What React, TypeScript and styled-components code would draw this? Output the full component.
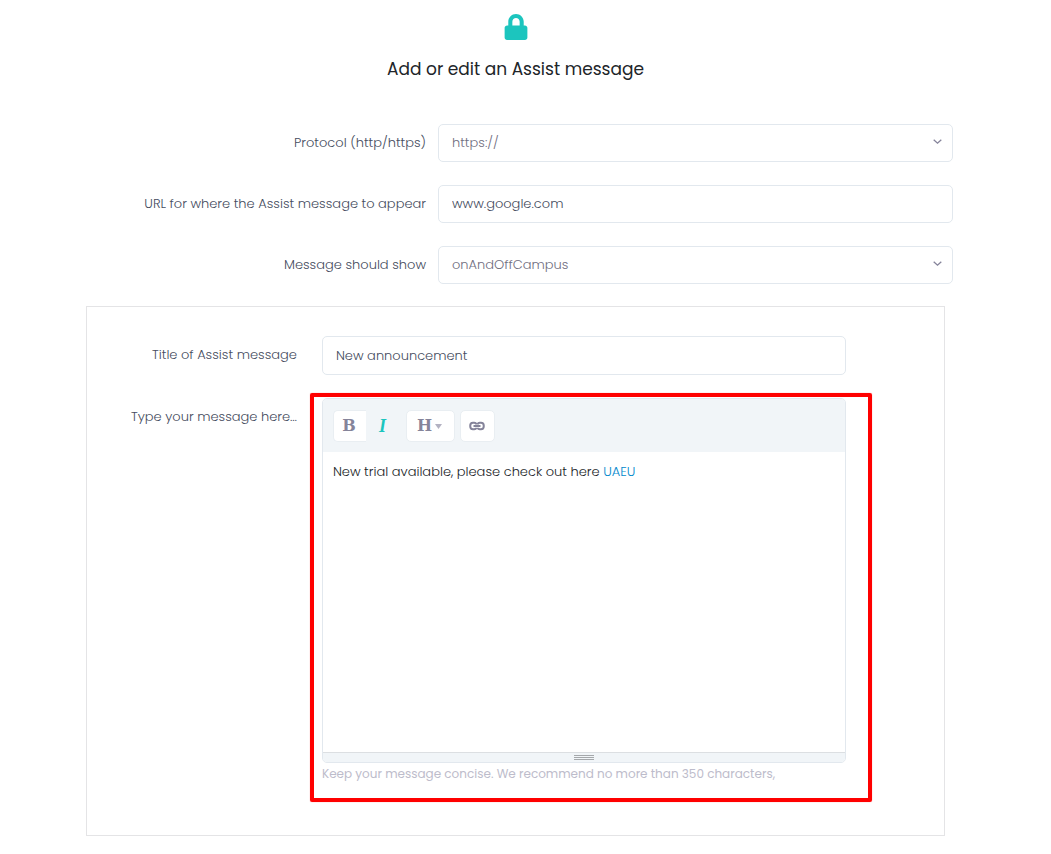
import React from "react";
import styled, { createGlobalStyle } from "styled-components";
import { FaLock } from "react-icons/fa";

const GlobalStyle = createGlobalStyle`
  *, *::before, *::after { box-sizing: border-box; }
  body {
    margin: 0;
    background: #fff;
    color: #575962;
    font: 300 13px/20px Poppins, Inter, "Open Sans", sans-serif;
  }
  input, select, button { font: inherit; }
`;

const Page = styled.main`
  padding: 14px 20px 18px 0;
`;

const Header = styled.header`
  display: flex;
  flex-direction: column;
  align-items: center;
  gap: 16px;
  margin-bottom: 42px;
  color: #1cc5be;
`;

const Title = styled.h1`
  margin: 0;
  color: #212529;
  font-size: 17px;
  font-weight: 400;
  line-height: 26px;
`;

const Fields = styled.div`
  display: flex;
  flex-direction: column;
  gap: 23px;
  margin-bottom: 22px;
`;

const Row = styled.div`
  display: grid;
  grid-template-columns: 438fr 515fr 78fr;
`;

const PanelRow = styled(Row)`
  grid-template-columns: 235fr 524fr 98fr;
`;

const Label = styled.label`
  padding: 9px 12px 0 0;
  color: #464d60;
  text-align: right;
`;

const PanelLabel = styled(Label)`
  padding-right: 25px;
`;

const TextInput = styled.input`
  width: 100%;
  height: 38px;
  padding: 0 13px;
  border: 1px solid #e2e8ee;
  border-radius: 5px;
  background: #fff;
  color: #464d60;
  outline: none;
`;

const TitleInput = styled(TextInput)`
  height: 39px;
`;

const SelectWrap = styled.div`
  position: relative;

  svg {
    position: absolute;
    top: 14px;
    right: 11px;
    pointer-events: none;
  }
`;

const Select = styled.select`
  appearance: none;
  display: block;
  width: 100%;
  height: 38px;
  padding: 0 32px 0 13px;
  border: 1px solid #e2e8ee;
  border-radius: 5px;
  background: #fff;
  color: #706e80;
  outline: none;
`;

const Panel = styled.section`
  display: flex;
  flex-direction: column;
  gap: 23px;
  width: calc(100% * 10 / 12);
  margin: 0 auto;
  padding: 29px 0 51px;
  border: 1px solid #e4e4e6;
`;

const Highlighted = styled.div`
  position: relative;
`;

const HighlightFrame = styled.div`
  position: absolute;
  inset: -5px -26px -18px -12px;
  border: 4px solid #f00;
  border-radius: 2px;
  box-shadow: 0 0 1px #f66;
  pointer-events: none;
`;

const Editor = styled.div`
  overflow: hidden;
  border: 1px solid #e2e8ee;
  border-radius: 5px;
`;

const Toolbar = styled.div`
  display: flex;
  align-items: flex-start;
  height: 53px;
  padding: 11px 10px 0;
  background: #f1f5f8;
`;

const ButtonGroup = styled.div`
  display: flex;
  margin-right: 5px;
`;

const ToolButton = styled.button<{ $width: number; $active?: boolean }>`
  display: flex;
  align-items: center;
  justify-content: center;
  gap: 3px;
  width: ${(p) => p.$width}px;
  height: 32px;
  padding: 0 2px 0 0;
  border: 1px solid ${(p) => (p.$active ? "transparent" : "#e9eef2")};
  border-radius: 5px;
  background: ${(p) => (p.$active ? "transparent" : "#fff")};
  color: ${(p) => (p.$active ? "#1cc5be" : "#85849a")};
  font-family: "DejaVu Serif", serif;
  font-size: 16px;
  font-weight: 700;

  ${ButtonGroup} &:first-child:not(:last-child) {
    border-right: 0;
    border-radius: 5px 0 0 5px;
  }
`;

const IconButton = styled(ToolButton)`
  padding: 0;
`;

const Italic = styled.em`
  font-family: "Liberation Serif", serif;
  font-size: 18px;
`;

const Content = styled.div`
  height: 300px;
  padding: 10px;
  color: #212529;
  outline: none;

  p { margin: 0; }
  a { color: #0088cc; text-decoration: none; }
`;

const ResizeBar = styled.div`
  display: flex;
  justify-content: center;
  height: 10px;
  padding-top: 2px;
  border-top: 1px solid #dcdfe2;
  background: #f1f5f8;
`;

const Grip = styled.div`
  width: 20px;
  height: 5px;
  border: solid #a5a8ab;
  border-width: 1px 0;
  background: linear-gradient(#a5a8ab, #a5a8ab) center / 100% 1px no-repeat;
`;

const Hint = styled.p`
  margin: 1px 0 0;
  color: #bdbccb;
  font-size: 12px;
  font-weight: 400;
`;

const Chevron = () => (
  <svg width="9" height="8" viewBox="0 0 9 8" fill="none" stroke="#85839a" strokeWidth="1.3" aria-hidden>
    <path d="M.7 1.8 4.5 5.2 8.3 1.8" />
  </svg>
);

const Caret = () => (
  <svg width="7" height="5" viewBox="0 0 7 5" fill="#b3b2c2" aria-hidden>
    <path d="M0 0h7L3.5 5z" />
  </svg>
);

const LinkIcon = () => (
  <svg width="16" height="10" viewBox="0 0 16 10" fill="none" stroke="currentColor" strokeWidth="2" aria-hidden>
    <path d="M7.2 3.6C7.2 2.4 6.4 1.8 5.2 1.8H4C2.200 1.8 1.200 3.100 1.200 5S2.200 8.200 4 8.200H5.200C6.400 8.200 7.200 7.600 7.200 6.800M8.800 3.600C8.800 2.400 9.600 1.800 10.800 1.800H12C13.800 1.800 14.800 3.100 14.800 5S13.800 8.200 12 8.200H10.800C9.600 8.200 8.800 7.600 8.800 6.800M4.500 5H11.500" />
  </svg>
);

export default function App() {
  return (
    <>
      <GlobalStyle />
      <Page>
        <Header>
          <FaLock size={26} aria-hidden />
          <Title>Add or edit an Assist message</Title>
        </Header>
        <form>
          <Fields>
            <Row>
              <Label htmlFor="protocol">Protocol (http/https)</Label>
              <SelectWrap>
                <Select id="protocol" defaultValue="https://">
                  <option>https://</option>
                  <option>http://</option>
                </Select>
                <Chevron />
              </SelectWrap>
            </Row>
            <Row>
              <Label htmlFor="url">URL for where the Assist message to appear</Label>
              <TextInput id="url" type="text" defaultValue="www.google.com" />
            </Row>
            <Row>
              <Label htmlFor="show">Message should show</Label>
              <SelectWrap>
                <Select id="show" defaultValue="onAndOffCampus">
                  <option>onAndOffCampus</option>
                </Select>
                <Chevron />
              </SelectWrap>
            </Row>
          </Fields>
          <Panel>
            <PanelRow>
              <PanelLabel htmlFor="title">Title of Assist message</PanelLabel>
              <TitleInput id="title" type="text" defaultValue="New announcement" />
            </PanelRow>
            <PanelRow>
              <PanelLabel as="span" id="message-label">Type your message here…</PanelLabel>
              <Highlighted>
                <Editor>
                  <Toolbar role="toolbar" aria-label="Formatting">
                    <ButtonGroup>
                      <ToolButton type="button" $width={33} aria-label="Bold">B</ToolButton>
                      <ToolButton type="button" $width={35} $active aria-label="Italic" aria-pressed>
                        <Italic>I</Italic>
                      </ToolButton>
                    </ButtonGroup>
                    <ButtonGroup>
                      <ToolButton type="button" $width={49} aria-label="Heading">
                        H<Caret />
                      </ToolButton>
                    </ButtonGroup>
                    <ButtonGroup>
                      <IconButton type="button" $width={35} aria-label="Link">
                        <LinkIcon />
                      </IconButton>
                    </ButtonGroup>
                  </Toolbar>
                  <Content
                    contentEditable
                    suppressContentEditableWarning
                    role="textbox"
                    aria-multiline
                    aria-labelledby="message-label"
                  >
                    <p>
                      New trial available, please check out here <a href="#uaeu">UAEU</a>
                    </p>
                  </Content>
                  <ResizeBar>
                    <Grip />
                  </ResizeBar>
                </Editor>
                <Hint>Keep your message concise. We recommend no more than 350 characters,</Hint>
                <HighlightFrame />
              </Highlighted>
            </PanelRow>
          </Panel>
        </form>
      </Page>
    </>
  );
}
